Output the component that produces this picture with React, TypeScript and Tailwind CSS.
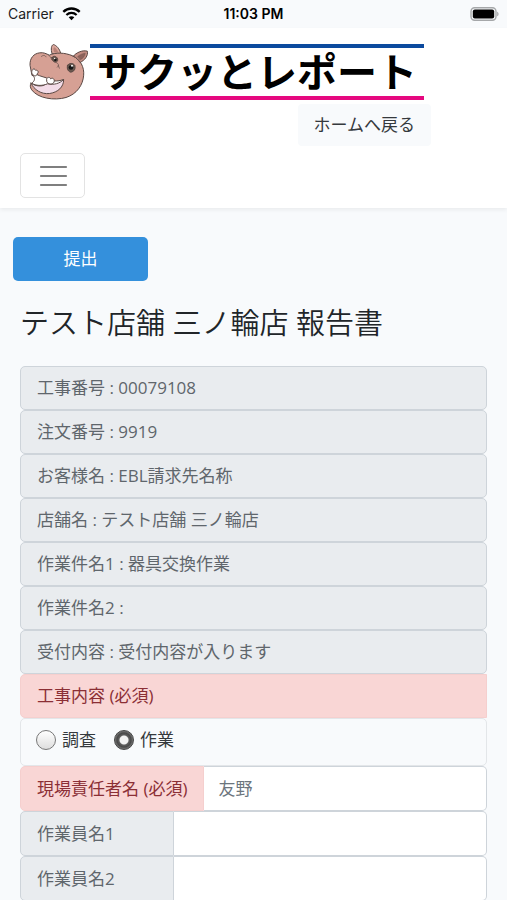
import type { ReactNode } from "react"

const details = [
  "工事番号 : 00079108",
  "注文番号 : 9919",
  "お客様名 : EBL請求先名称",
  "店舗名 : テスト店舗 三ノ輪店",
  "作業件名1 : 器具交換作業",
  "作業件名2 :",
  "受付内容 : 受付内容が入ります",
]

function HippoIcon() {
  return (
    <svg
      viewBox="28 14 180 170"
      className="h-[57px] w-[60px] shrink-0"
      fill="none"
      stroke="#5a4844"
      strokeWidth="3"
      strokeLinecap="round"
      strokeLinejoin="round"
      aria-hidden="true"
    >
      <path d="M97 42 C93 28 95 18 101 15 C110 17 120 28 123 41 Z" fill="#dba79c" />
      <path d="M103 38 C100 29 101 24 104 23 C110 27 114 33 116 39 Z" fill="#b98278" stroke="none" />
      <path
        d="M31 76 C30 55 43 42 60 40 C72 38 80 43 89 47 C108 38 135 39 159 49 C183 61 194 83 192 107 C190 137 171 164 139 174 C104 184 55 177 36 151 C31 144 31 136 34 131 C42 138 55 141 67 139 C76 138 80 133 82 127 L66 118 L38 108 Z"
        fill="#d6a094"
      />
      <path
        d="M34 131 C45 139 59 141 71 138 C88 125 112 130 132 120 C132 143 115 158 90 162 C65 165 43 151 34 131 Z"
        fill="#f3dce8"
      />
      <path
        d="M41 99 C53 108 67 111 80 115 C94 126 113 127 132 120 C120 132 104 137 83 133 C67 140 48 139 36 131 C46 124 47 116 41 109 Z"
        fill="#fff"
      />
      <path d="M42 88 C35 91 34 101 40 106 C46 112 53 108 52 103 C59 99 55 91 49 92 Z" fill="#fff" />
      <path d="M81 118 C82 112 91 112 93 118 C101 112 107 122 102 130 C96 136 85 134 82 128 Z" fill="#fff" />
      <path d="M161 50 C169 40 187 31 203 35 C206 48 196 62 181 69 C176 60 170 54 161 50 Z" fill="#c58d83" />
      <path d="M174 51 C181 45 190 41 197 41 C196 50 190 57 182 61 Z" fill="#8c625b" strokeWidth="1" />
      <path d="M144 77 C149 70 160 70 165 77 C169 88 163 97 153 98 C143 95 141 84 144 77 Z" fill="#69584e" />
      <path d="M97 54 C101 48 110 49 114 58 C115 64 112 69 106 68 C99 66 96 60 97 54 Z" fill="#69584e" />
      <circle cx="154" cy="84" r="7" fill="#161616" stroke="none" />
      <circle cx="157" cy="79" r="3" fill="#fff" stroke="none" />
      <circle cx="107" cy="61" r="4" fill="#161616" stroke="none" />
      <circle cx="105" cy="57" r="2" fill="#fff" stroke="none" />
      <path d="M65 51 C70 46 77 47 79 52 M88 48 C92 52 95 56 96 60 M111 70 C118 73 118 78 113 83 M116 78 L119 86" strokeWidth="2" />
    </svg>
  )
}

function StatusBar() {
  return (
    <div className="grid h-7 grid-cols-3 items-center bg-[#f8fafc] px-2 font-[Inter,sans-serif] text-sm text-[#1d1d1f]">
      <div className="flex items-center gap-2">
        Carrier
        <svg viewBox="0 0 19 14" className="h-3.5 w-[19px]" aria-hidden="true">
          <path d="M1.3 4.8 C6 0.4 13 0.4 17.7 4.8" fill="none" stroke="#000" strokeWidth="2.4" />
          <path d="M4.4 8 C7.3 5.2 11.7 5.2 14.6 8" fill="none" stroke="#000" strokeWidth="2.2" />
          <path d="M6.7 10.3 C8.3 8.9 10.7 8.9 12.3 10.3 L9.5 13.2 Z" />
        </svg>
      </div>
      <div className="text-center font-semibold text-black">11:03 PM</div>
      <svg viewBox="0 0 31 14" className="h-3.5 w-[31px] justify-self-end" aria-hidden="true">
        <rect x="3" y="0.8" width="25" height="12.4" rx="3.6" fill="#f8fafc" stroke="#a5a7a9" strokeWidth="1.4" />
        <rect x="4.8" y="2.6" width="21.4" height="8.8" rx="2" />
        <path d="M29.2 4.7 C31 5.4 31 8.6 29.2 9.3 Z" fill="#a5a7a9" />
      </svg>
    </div>
  )
}

function Navbar() {
  return (
    <nav className="bg-white px-5 pt-4 pb-2.5 shadow-[0_2px_4px_rgba(0,0,0,0.06)]">
      <div className="flex w-fit flex-col">
        <a href="#" className="flex items-start pr-[7px] pl-[9px]">
          <HippoIcon />
          <span className="ml-px flex h-14 items-center border-t-4 border-b-4 border-t-[#0b4a9e] border-b-[#e5087f] px-[7px] text-[40px] leading-none font-bold text-black">
            サクッとレポート
          </span>
        </a>
        <a
          href="#"
          className="mt-[3px] self-end rounded bg-[#f8fafc] px-4 py-2.5 leading-[22px] text-[#35393d]"
        >
          ホームへ戻る
        </a>
      </div>
      <button
        type="button"
        aria-label="メニュー"
        className="mt-[7px] flex h-[45px] w-[65px] items-center justify-center rounded-[5px] border border-[#e3e3e3]"
      >
        <svg viewBox="0 0 32 32" className="size-8" stroke="#7f7f7f" strokeWidth="2.2" strokeLinecap="round">
          <path d="M4 7h25M4 16h25M4 25h25" />
        </svg>
      </button>
    </nav>
  )
}

function RadioOption({ label, checked = false }: { label: string; checked?: boolean }) {
  return (
    <label className="flex items-center gap-1.5">
      <input
        type="radio"
        name="work"
        defaultChecked={checked}
        className="size-5 appearance-none rounded-full border border-[#777] bg-linear-to-b from-white to-[#dedede] checked:border-[#444] checked:bg-[radial-gradient(circle,#f2f2f2_0_4px,#606060_5px,#484848_7px,#777_9px)]"
      />
      {label}
    </label>
  )
}

interface FieldRowProps {
  id: string
  label: ReactNode
  placeholder?: string
  required?: boolean
}

function FieldRow({ id, label, placeholder, required = false }: FieldRowProps) {
  return (
    <div className="flex h-[45px]">
      <label
        htmlFor={id}
        className={
          required
            ? "flex shrink-0 items-center rounded-l-[5px] border border-[#f5cfce] bg-[#f9d6d5] px-4 text-[#8b2f35]"
            : "flex w-[33%] shrink-0 items-center rounded-l-[5px] border border-[#ced4da] bg-[#e9ecef] px-4 text-[#5f666c]"
        }
      >
        {label}
      </label>
      <input
        id={id}
        type="text"
        placeholder={placeholder}
        className="min-w-0 flex-1 rounded-r-[5px] border border-l-0 border-[#ced4da] bg-white px-3.5 placeholder:text-[#6c757d]"
      />
    </div>
  )
}

export default function App() {
  return (
    <div className="min-h-screen bg-[#f8fafc] font-['Open_Sans','Noto_Sans_CJK_JP',sans-serif] text-[17px] leading-6 text-[#35393d]">
      <StatusBar />
      <Navbar />

      <main className="pt-[29px]">
        <button
          type="submit"
          form="report"
          className="ml-[13px] block h-11 w-[135px] rounded-[5px] bg-[#3490dc] text-white"
        >
          提出
        </button>

        <form id="report" className="px-5">
          <h1 className="mt-[25px] mb-[26px] text-[29px] leading-[34px] font-[350] text-[#212529]">
            テスト店舗 三ノ輪店 報告書
          </h1>

          {details.map((text) => (
            <div
              key={text}
              className="flex h-11 items-center rounded-[5px] border border-[#ced4da] bg-[#e9ecef] px-4 text-[#5f666c]"
            >
              {text}
            </div>
          ))}

          <fieldset>
            <legend className="flex h-11 w-full items-center rounded-l-[5px] border border-[#f5cfce] bg-[#f9d6d5] px-4 text-[#8b2f35]">
              工事内容 (必須)
            </legend>
            <div className="flex h-12 items-center gap-[18px] rounded-[5px] border border-[#e3e6e9] px-[15px] pb-1">
              <RadioOption label="調査" />
              <RadioOption label="作業" checked />
            </div>
          </fieldset>

          <FieldRow id="manager" label="現場責任者名 (必須)" placeholder="友野" required />
          <FieldRow id="worker1" label="作業員名1" />
          <FieldRow id="worker2" label="作業員名2" />
        </form>
      </main>
    </div>
  )
}
